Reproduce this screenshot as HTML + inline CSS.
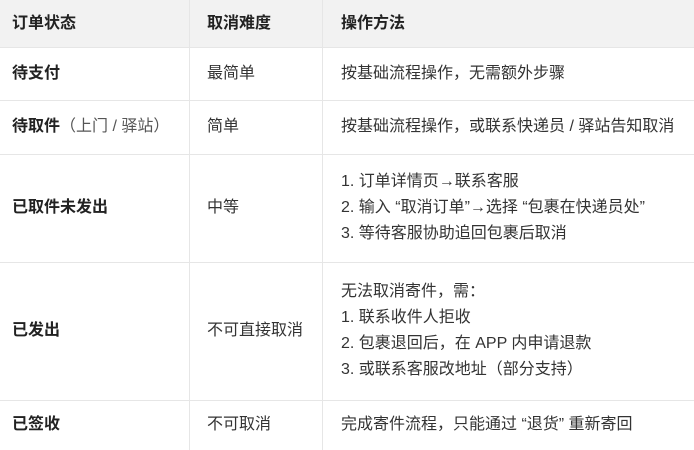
<!DOCTYPE html>
<html><head><meta charset="utf-8"><style>
*{margin:0;padding:0;box-sizing:border-box}
body{width:694px;height:450px;background:#fff;position:relative;overflow:hidden;font-family:"Liberation Sans","Noto Sans CJK SC",sans-serif;font-size:16px;color:#333}
.hd{position:absolute;left:0;top:0;width:694px;height:47px;background:#f2f2f2}
.h{position:absolute;left:0;width:694px;height:1px;background:#e6e6e6}
.v{position:absolute;top:0;width:1px;height:450px;background:#e6e6e6}
.c{position:absolute;display:flex;flex-direction:column;justify-content:center;line-height:26px;white-space:nowrap}
b{font-weight:bold;color:#222}
.s{color:#555}
</style></head><body>
<div class="hd"></div>
<div class="h" style="top:47px"></div>
<div class="h" style="top:100px"></div>
<div class="h" style="top:154px"></div>
<div class="h" style="top:262px"></div>
<div class="h" style="top:400px"></div>
<div class="v" style="left:189px"></div>
<div class="v" style="left:322px"></div>

<div class="c" style="left:12px;top:0;height:47px"><b>订单状态</b></div>
<div class="c" style="left:207px;top:0;height:47px"><b>取消难度</b></div>
<div class="c" style="left:341px;top:0;height:47px"><b>操作方法</b></div>

<div class="c" style="left:12px;top:47px;height:53px"><b>待支付</b></div>
<div class="c" style="left:207px;top:47px;height:53px">最简单</div>
<div class="c" style="left:341px;top:47px;height:53px">按基础流程操作，无需额外步骤</div>

<div class="c" style="left:12px;top:100px;height:54px"><div><b>待取件</b><span class="s">（上门 / 驿站）</span></div></div>
<div class="c" style="left:207px;top:100px;height:54px">简单</div>
<div class="c" style="left:341px;top:100px;height:54px">按基础流程操作，或联系快递员 / 驿站告知取消</div>

<div class="c" style="left:12px;top:154px;height:108px"><b>已取件未发出</b></div>
<div class="c" style="left:207px;top:154px;height:108px">中等</div>
<div class="c" style="left:341px;top:154px;height:108px"><div>1. 订单详情页→联系客服</div><div>2. 输入 “取消订单”→选择 “包裹在快递员处”</div><div>3. 等待客服协助追回包裹后取消</div></div>

<div class="c" style="left:12px;top:262px;height:138px"><b>已发出</b></div>
<div class="c" style="left:207px;top:262px;height:138px">不可直接取消</div>
<div class="c" style="left:341px;top:262px;height:138px"><div>无法取消寄件，需：</div><div>1. 联系收件人拒收</div><div>2. 包裹退回后，在 APP 内申请退款</div><div>3. 或联系客服改地址（部分支持）</div></div>

<div class="c" style="left:12px;top:400px;height:50px"><b>已签收</b></div>
<div class="c" style="left:207px;top:400px;height:50px">不可取消</div>
<div class="c" style="left:341px;top:400px;height:50px">完成寄件流程，只能通过 “退货” 重新寄回</div>
</body></html>
